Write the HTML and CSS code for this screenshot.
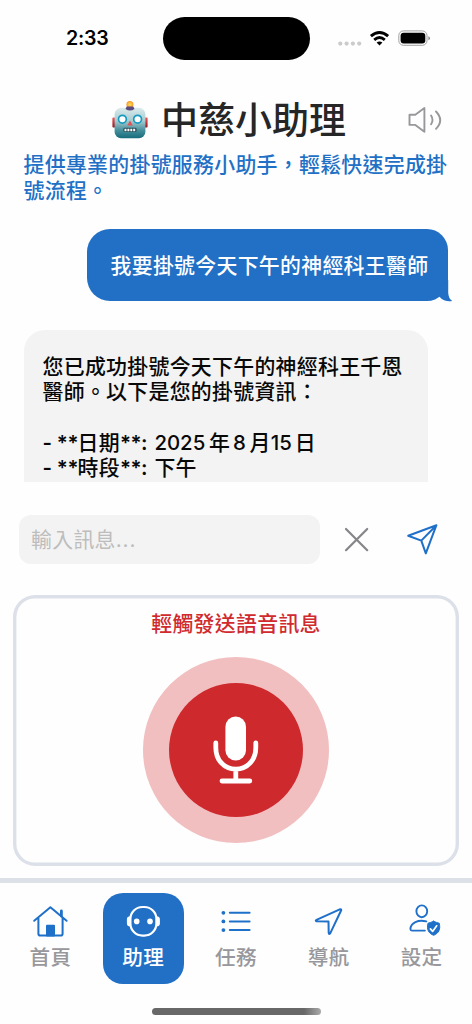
FILE: index.html
```html
<!DOCTYPE html>
<html lang="zh-Hant">
<head>
<meta charset="utf-8">
<title>中慈小助理</title>
<link rel="stylesheet" href="styles.css">
</head>
<body>
<div class="phone">
  <div class="status">
    <span class="time">2:33</span>
    <span class="island"></span>
    <svg class="status-icons" viewBox="336 28 96 20" width="96" height="20">
      <g fill="#cbcbcd"><circle cx="340.3" cy="43.6" r="2.1"/><circle cx="346.6" cy="43.6" r="2.1"/><circle cx="352.9" cy="43.6" r="2.1"/><circle cx="359.2" cy="43.6" r="2.1"/></g>
      <g fill="none" stroke="#000" stroke-width="2.9"><path d="M370.9 36.1q8.6-7.3 17.2 0"/><path d="M374.2 39.8q5.3-4.4 10.6 0"/></g>
      <path d="M376.6 42.6q2.9-2.4 5.8 0L379.5 45.6z"/>
      <rect x="398.8" y="30.9" width="28.2" height="14.4" rx="4.6" fill="none" stroke="#a0a0a0"/>
      <rect x="400.6" y="32.8" width="24.7" height="10.8" rx="3"/>
      <path d="M428.4 36.2v4q1.6-.7 1.6-2t-1.6-2z" fill="#888"/>
    </svg>
  </div>

  <header class="header">
    <svg class="robot" viewBox="111 99 38 40" width="38" height="40">
      <defs>
        <linearGradient id="face" x1="0" y1="0" x2="0" y2="1"><stop offset="0" stop-color="#dcebec"/><stop offset=".42" stop-color="#a8ccd1"/><stop offset=".75" stop-color="#438e9b"/><stop offset="1" stop-color="#176c7c"/></linearGradient>
        <linearGradient id="ear" x1="0" y1="0" x2="0" y2="1"><stop offset="0" stop-color="#ed5958"/><stop offset="1" stop-color="#95151d"/></linearGradient>
        <radialGradient id="bulb"><stop offset="0" stop-color="#ffdf63"/><stop offset="1" stop-color="#f29a22"/></radialGradient>
      </defs>
      <rect x="112.4" y="116.4" width="4" height="10.2" rx="1" fill="url(#ear)"/>
      <rect x="143.6" y="116.4" width="4" height="10.2" rx="1" fill="url(#ear)"/>
      <circle cx="129.9" cy="103.6" r="3.5" fill="url(#bulb)"/>
      <rect x="114.6" y="106.8" width="30.8" height="30.4" rx="6.5" fill="url(#face)"/>
      <path d="M125.5 108q4.5 3.2 9 0l-1.2-2.4h-6.6z" fill="#594b80"/>
      <g fill="#fff" stroke="#159bc0" stroke-width="1.7"><circle cx="122.4" cy="118.2" r="3.9"/><circle cx="137.6" cy="118.2" r="3.9"/></g>
      <path d="M130 119.4l2.7 5h-5.4z" fill="#e05255"/>
      <rect x="123.4" y="126.7" width="13.2" height="4.4" rx="1.4" fill="#254c57"/>
      <path d="M124.5 128.9h11" stroke="#fff" stroke-width="2.5" stroke-dasharray="2 .9"/>
    </svg>
    <h1 class="title">中慈小助理</h1>
    <svg class="speaker" viewBox="406 104 38 32" width="38" height="32" fill="none" stroke="#98989c" stroke-width="1.9" stroke-linecap="round" stroke-linejoin="round">
      <path d="M409.5 114.8h5.8l9.1-6.7v23.6l-9.1-6.8h-5.8z"/>
      <path d="M431.1 115.5q2.8 4.4 0 8.8M436 111.5q8.4 8.7 0 17.3"/>
    </svg>
  </header>
  <p class="subtitle">提供專業的掛號服務小助手，輕鬆快速完成掛<br>號流程。</p>

  <main class="chat">
    <div class="bubble user">我要掛號今天下午的神經科王醫師
      <svg class="tail" viewBox="426 280 28 22" width="28" height="22"><path fill="#2170c6" d="M448.2 280v12.5q.2 6 4 8.5q-7.5 1.3-12.5-4.1L434 290z"/></svg>
    </div>
    <div class="bubble bot">
      <p>您已成功掛號今天下午的神經科王千恩<br>醫師。以下是您的掛號資訊：</p>
      <p class="fields"><span class="mark">- **</span>日期<span class="colon">**:</span><span class="num year">2025</span>年<span class="num month">8</span>月<span class="num day">15</span>日<br><span class="mark">- **</span>時段<span class="colon">**:</span>下午</p>
    </div>
  </main>

  <div class="composer">
    <div class="field">輸入訊息<span>...</span></div>
    <svg class="close" viewBox="342 525 30 30" width="30" height="30" fill="none" stroke="#85858a" stroke-width="2.2" stroke-linecap="round"><path d="M346 529l21.2 21.2M367.2 529L346 550.2"/></svg>
    <svg class="send" viewBox="405 522 36 36" width="36" height="36" fill="none" stroke="#1f70c9" stroke-width="2" stroke-linejoin="round" stroke-linecap="round"><path d="M408.2 535.8L436.4 525.2 425.8 553.4 421.3 540.6zM421.3 540.6L436.4 525.2"/></svg>
  </div>

  <section class="voice">
    <div class="voice-label">輕觸發送語音訊息</div>
    <div class="halo"><div class="mic">
      <svg viewBox="209 712 54 76" width="54" height="76" fill="none" stroke="#fff" stroke-width="4.8" stroke-linecap="round"><rect x="225.4" y="716.6" width="20.6" height="44" rx="10.3" fill="#fff" stroke="none"/><path d="M215.8 743v4.4c0 12.6 8.2 21.7 20 21.7s20-9.1 20-21.7V743M235.8 770v11M222 781h27.8"/></svg>
    </div></div>
  </section>

  <nav class="tabs">
    <div class="tab">
      <svg viewBox="30 900 40 40" width="40" height="40" fill="none" stroke="#1f70c9" stroke-width="2" stroke-linecap="round" stroke-linejoin="round"><path d="M34.2 920.8L50.4 907.3 66.6 920.8M38.4 918v15.8q0 1.8 1.8 1.8h20.6q1.8 0 1.8-1.8V918"/><path d="M61.4 911v5" stroke-width="2.8"/><path d="M47 935.5V925.8h7v9.7z" fill="#1f70c9"/></svg>
      <span>首頁</span>
    </div>
    <div class="tab active">
      <svg viewBox="123 900 40 40" width="40" height="40"><rect x="130.4" y="907" width="26" height="28.6" rx="12" fill="none" stroke="#fff" stroke-width="2.2"/><path d="M130.5 916.2q-3.6 0-3.6 3v4.2q0 3 3.6 3zM156.3 916.2q3.6 0 3.6 3v4.2q0 3-3.6 3z" fill="#fff"/><circle cx="136.7" cy="921.4" r="2.8" fill="#fff"/><circle cx="150" cy="921.4" r="2.8" fill="#fff"/></svg>
      <span>助理</span>
    </div>
    <div class="tab">
      <svg viewBox="215.5 900 40 40" width="40" height="40"><path d="M229.3 912.8h19.8M229.3 921.4h19.8M229.3 930.1h19.8" stroke="#1f70c9" stroke-width="2" stroke-linecap="round"/><g fill="#1f70c9"><circle cx="222.9" cy="912.8" r="1.9"/><circle cx="222.9" cy="921.4" r="1.9"/><circle cx="222.9" cy="930.1" r="1.9"/></g></svg>
      <span>任務</span>
    </div>
    <div class="tab">
      <svg viewBox="308.5 900 40 40" width="40" height="40" fill="none" stroke="#1f70c9" stroke-width="2" stroke-linejoin="round"><path d="M316 919.8L339.8 909.2q1.2-.3.9 1L329.7 933.4q-1.3 1.3-1.5-.4L328 921.6 316 921.3q-1.5-.8 0-1.5z"/></svg>
      <span>導航</span>
    </div>
    <div class="tab">
      <svg viewBox="401.5 900 40 40" width="40" height="40" fill="none" stroke="#1f70c9" stroke-width="1.9" stroke-linecap="round" stroke-linejoin="round"><ellipse cx="421.3" cy="911.3" rx="5.4" ry="5.9"/><path d="M425.8 921.4c-8-2.3-15.7 1.5-15.9 7.7q0 1.5 1.5 1.5h13"/><path d="M433.1 921.3q3 1.3 5.6 1.9c1.6 6-.5 10.2-5.6 12.1-5.1-1.9-7.2-6.1-5.6-12.1q2.6-.6 5.6-1.9z" fill="#1f70c9" stroke-width="1"/><path d="M429.9 928.9l2.2 2.5 4.1-5.6" stroke="#fff" stroke-width="1.7"/></svg>
      <span>設定</span>
    </div>
  </nav>
  <div class="home-indicator"></div>
</div>
</body>
</html>
```
FILE: styles.css
```css
* { box-sizing: border-box; }
body { margin: 0; background: #fefefe; }
h1, p { margin: 0; }
svg { display: block; flex: none; }
.phone {
  width: 472px;
  height: 1024px;
  overflow: hidden;
  display: flex;
  flex-direction: column;
  font-family: "Noto Sans CJK TC", sans-serif;
  font-size: 20.9px;
  font-weight: 500;
  letter-spacing: 0.3px;
  line-height: 25.5px;
  white-space: nowrap;
}
.status { height: 76px; flex: none; display: flex; align-items: center; }
.time { width: 96.5px; margin-left: 66px; font: 600 19.6px/24px Inter, sans-serif; letter-spacing: -0.2px; }
.island { width: 147px; height: 43px; border-radius: 22px; background: #000; }
.status-icons { margin-left: 26.5px; }

.header { height: 75px; flex: none; display: flex; align-items: center; padding: 13px 0 0 111px; }
.robot { margin-top: -1px; }
.title { width: 196px; margin: -4px 0 0 12px; font-size: 37px; font-weight: 500; line-height: 50px; letter-spacing: 0; color: #262626; }
.speaker { margin-left: 49px; }
.subtitle { height: 78px; flex: none; padding-left: 23.5px; color: #2170c6; }

.chat { height: 253px; flex: none; display: flex; flex-direction: column; padding: 0 24px; }
.bubble.user {
  position: relative;
  align-self: flex-end;
  width: 361px;
  height: 72px;
  padding: 22.5px 0 0 23.5px;
  border-radius: 23px 21px 21px 23px;
  background: #2170c6;
  color: #fff;
}
.tail { position: absolute; right: -6px; bottom: -1px; }
.bubble.bot {
  width: 404px;
  height: 152px;
  margin-top: 29px;
  padding: 22.5px 0 0 18.5px;
  border-radius: 21px 21px 0 0;
  background: #f3f3f3;
  color: #080808;
}
.fields { margin-top: 25px; }
.mark, .colon, .num { display: inline-block; font-family: Inter, sans-serif; font-size: 20.4px; line-height: 18px; letter-spacing: 0; }
.mark, .colon { font-weight: 600; }
.mark { width: 35px; letter-spacing: -0.2px; }
.colon { width: 34.5px; letter-spacing: -0.5px; }
.year { width: 54.5px; }
.month { width: 19.5px; padding-left: 3px; }
.day { width: 24px; }

.composer { height: 49px; flex: none; display: flex; align-items: center; margin: 33px 0 0 19px; }
.field { width: 301px; height: 49px; padding: 10.5px 12px; border-radius: 12px; background: #f3f3f3; color: #bdbdbd; font-weight: 400; }
.field span { font-family: Inter, sans-serif; letter-spacing: 0.8px; }
.close { margin-left: 22px; }
.send { margin-left: 33px; }

.voice {
  height: 271px;
  flex: none;
  margin: 31px 13px 12px;
  box-shadow: inset 0 0 0 3.4px #dce0e8;
  border-radius: 22px;
  display: flex;
  flex-direction: column;
  align-items: center;
  padding-top: 15px;
}
.voice-label { color: #d02a2e; }
.halo, .mic { display: flex; align-items: center; justify-content: center; border-radius: 50%; flex: none; }
.halo { width: 186px; height: 186px; margin-top: 21.5px; background: #f1bfc0; }
.mic { width: 134.5px; height: 134.5px; background: #ce2a2e; }

.tabs { height: 111px; flex: none; display: flex; align-items: flex-start; padding: 9.5px 4px 0; border-top: 5px solid #dce0e7; }
.tab { flex: 1; height: 91.5px; padding-top: 7.5px; display: flex; flex-direction: column; align-items: center; gap: 3px; color: #98989c; }
.tab svg { height: 40px; }
.tab span { font-size: 20.6px; line-height: 26px; }
.tab.active { flex: none; width: 81px; margin: 0 5.8px; border-radius: 20px; background: #2170c6; color: #fff; }
.home-indicator { width: 169px; height: 6.5px; flex: none; margin: 19px auto 0; border-radius: 4px; background: linear-gradient(90deg, #686868 90%, #aaa); }
```
